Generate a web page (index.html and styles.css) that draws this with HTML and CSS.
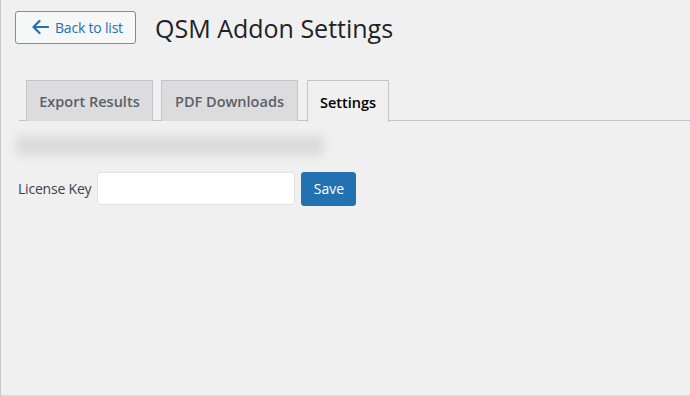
FILE: index.html
```html
<!DOCTYPE html>
<html>
<head>
<meta charset="utf-8">
<link rel="stylesheet" href="styles.css">
</head>
<body>
<div class="page">
  <header class="header">
    <a class="back-btn" href="#">
      <svg class="arrow" width="18" height="16" viewBox="0 0 18 16"><path d="M17 8H2.5M8.5 2L2.5 8l6 6" fill="none" stroke="#2271b1" stroke-width="2.2" stroke-linecap="round" stroke-linejoin="round"/></svg>
      <span>Back to list</span>
    </a>
    <h1 class="title">QSM Addon Settings</h1>
  </header>
  <nav class="tabs">
    <a class="tab" href="#">Export Results</a>
    <a class="tab" href="#">PDF Downloads</a>
    <a class="tab active" href="#">Settings</a>
  </nav>
  <div class="notice"></div>
  <form class="license-row">
    <label class="label">License Key</label>
    <input class="input" type="text">
    <button class="save" type="button">Save</button>
  </form>
</div>
</body>
</html>
```
FILE: styles.css
```css
html, body {
  margin: 0;
  padding: 0;
  background: #f0f0f1;
}
.page {
  box-sizing: border-box;
  width: 690px;
  height: 396px;
  border-left: 1px solid #c8c8ca;
  border-bottom: 1px solid #dcdcde;
  font-family: "Open Sans", "Noto Sans", sans-serif;
  color: #3c434a;
  overflow: hidden;
}
.header {
  display: flex;
  align-items: center;
  gap: 19px;
  padding: 10px 0 0 14px;
}
.back-btn {
  box-sizing: border-box;
  display: flex;
  align-items: center;
  gap: 6px;
  height: 33px;
  width: 121px;
  padding: 0 0 0 15px;
  border: 1px solid #5b97ca;
  border-radius: 3px;
  background: #f6f7f7;
  color: #2271b1;
  font-size: 14px;
  text-decoration: none;
  letter-spacing: -0.2px;
}
.arrow { display: block; margin-top: -1px; }
.title {
  margin: 0;
  font-size: 25px;
  font-weight: 400;
  color: #1d2327;
  line-height: 1.3;
  letter-spacing: 0;
  padding-top: 2px;
}
.tabs {
  display: flex;
  gap: 8px;
  margin: 35px 0 0 18px;
  padding-left: 7px;
  border-bottom: 1px solid #c3c4c7;
  height: 41px;
  box-sizing: border-box;
}
.tab {
  box-sizing: border-box;
  display: flex;
  align-items: center;
  justify-content: center;
  height: 41px;
  padding-top: 2px;
  border: 1px solid #c3c4c7;
  border-bottom: none;
  background: #dcdcde;
  color: #5a6066;
  font-size: 14.5px;
  font-weight: 600;
  text-decoration: none;
}
.tab:nth-child(1) { width: 127px; }
.tab:nth-child(2) { width: 137px; }
.tab.active {
  width: 82px;
  margin-left: 1px;
  background: #f0f0f1;
  color: #000;
  height: 42px;
  margin-bottom: -1px;
}
.notice {
  margin: 14px 0 0 15px;
  width: 308px;
  height: 21px;
  background: #dcdcdc;
  border-radius: 6px;
  filter: blur(4px);
}
.license-row {
  display: flex;
  align-items: center;
  margin: 16px 0 0 17px;
}
.label {
  font-size: 14px;
  color: #3c434a;
  margin-right: 6px;
  letter-spacing: -0.2px;
}
.input {
  box-sizing: border-box;
  width: 198px;
  height: 33px;
  border: 1px solid #e2e2e4;
  border-radius: 4px;
  background: #fff;
  margin: 0 6px 0 0;
  padding: 0 8px;
}
.save {
  box-sizing: border-box;
  width: 55px;
  height: 34px;
  border: 1px solid #2271b1;
  border-radius: 3px;
  background: #2271b1;
  color: #fff;
  font-family: "Open Sans", "Noto Sans", sans-serif;
  font-size: 14px;
  padding: 0;
}
```
